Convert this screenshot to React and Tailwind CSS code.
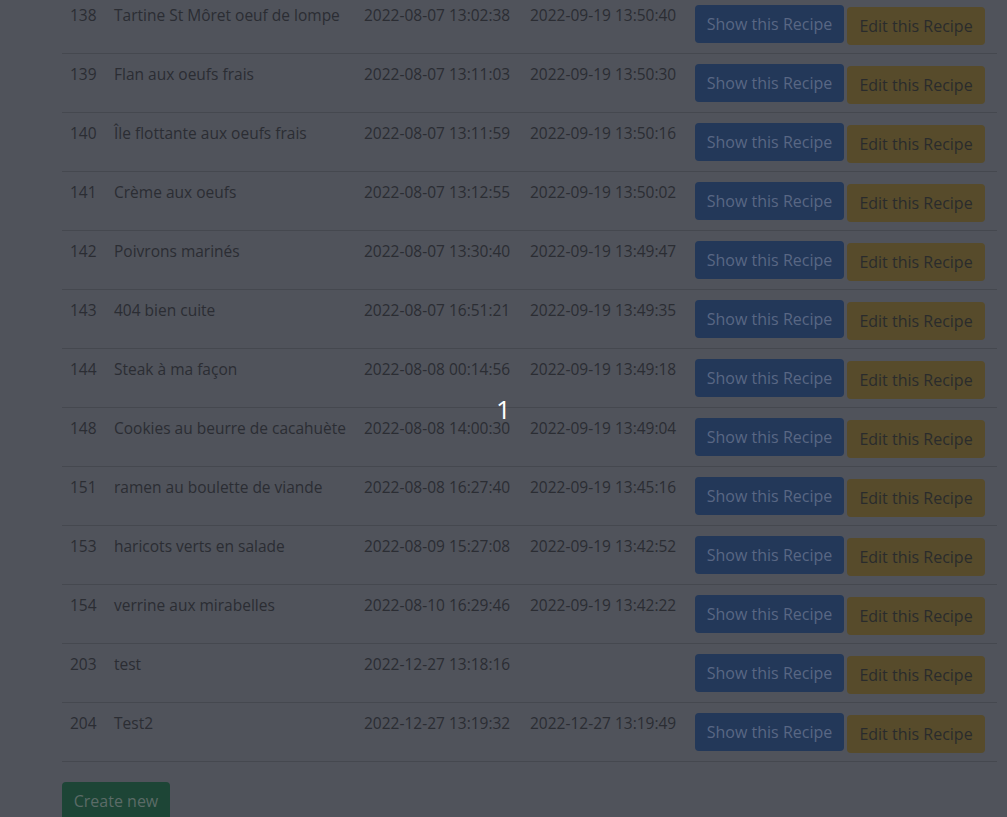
const recipes = [
  { id: 138, title: 'Tartine St Môret oeuf de lompe', created: '2022-08-07 13:02:38', updated: '2022-09-19 13:50:40' },
  { id: 139, title: 'Flan aux oeufs frais', created: '2022-08-07 13:11:03', updated: '2022-09-19 13:50:30' },
  { id: 140, title: 'Île flottante aux oeufs frais', created: '2022-08-07 13:11:59', updated: '2022-09-19 13:50:16' },
  { id: 141, title: 'Crème aux oeufs', created: '2022-08-07 13:12:55', updated: '2022-09-19 13:50:02' },
  { id: 142, title: 'Poivrons marinés', created: '2022-08-07 13:30:40', updated: '2022-09-19 13:49:47' },
  { id: 143, title: '404 bien cuite', created: '2022-08-07 16:51:21', updated: '2022-09-19 13:49:35' },
  { id: 144, title: 'Steak à ma façon', created: '2022-08-08 00:14:56', updated: '2022-09-19 13:49:18' },
  { id: 148, title: 'Cookies au beurre de cacahuète', created: '2022-08-08 14:00:30', updated: '2022-09-19 13:49:04' },
  { id: 151, title: 'ramen au boulette de viande', created: '2022-08-08 16:27:40', updated: '2022-09-19 13:45:16' },
  { id: 153, title: 'haricots verts en salade', created: '2022-08-09 15:27:08', updated: '2022-09-19 13:42:52' },
  { id: 154, title: 'verrine aux mirabelles', created: '2022-08-10 16:29:46', updated: '2022-09-19 13:42:22' },
  { id: 203, title: 'test', created: '2022-12-27 13:18:16', updated: '' },
  { id: 204, title: 'Test2', created: '2022-12-27 13:19:32', updated: '2022-12-27 13:19:49' },
];

function RecipeRow({ recipe }) {
  return (
    <div className="flex h-[59px] border-b border-[#45484f]">
      <div className="w-[44px] pl-2 pt-[8px] leading-6">{recipe.id}</div>
      <div className="w-[250px] pl-2 pt-[8px] leading-6">{recipe.title}</div>
      <div className="w-[166px] pl-2 pt-[8px] leading-6">{recipe.created}</div>
      <div className="w-[165px] pl-2 pt-[8px] leading-6">{recipe.updated}</div>
      <div className="flex flex-1 items-start gap-[3px] pl-2 pt-[10px] text-[16px]">
        <button className="h-[38px] w-[149px] rounded-[4px] bg-[#233859] text-[#596784] leading-6">
          Show this Recipe
        </button>
        <button className="mt-[2px] h-[38px] w-[138px] rounded-[4px] bg-[#574b2b] text-[#2a2b2c] leading-6">
          Edit this Recipe
        </button>
      </div>
    </div>
  );
}

export default function App() {
  return (
    <div className="relative h-[817px] overflow-hidden bg-[#50535b] font-['Open_Sans',sans-serif] text-[15.5px] text-[#2b2d33]">
      <div className="-mt-[5px] pl-[62px]">
        <div className="w-[935px]">
          {recipes.map((r) => (
            <RecipeRow key={r.id} recipe={r} />
          ))}
        </div>
        <button className="mt-[20px] h-[38px] w-[108px] rounded-[4px] bg-[#1d4536] text-[16px] text-[#5b6b67] leading-6">
          Create new
        </button>
      </div>
      <div className="absolute left-1/2 top-1/2 -translate-x-1/2 -translate-y-1/2 text-[26px] leading-none text-white">
        1
      </div>
    </div>
  );
}
